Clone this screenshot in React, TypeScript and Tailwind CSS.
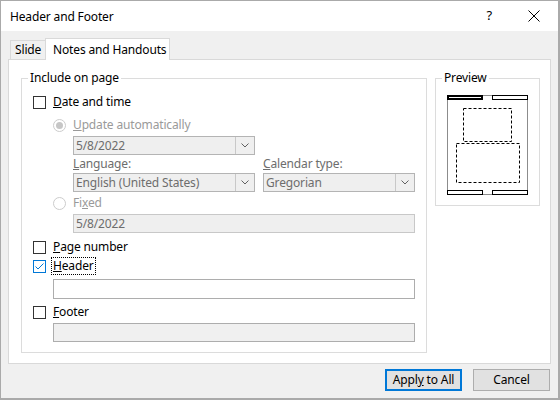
import React from "react";

/**
 * "Header and Footer" dialog, Notes and Handouts tab.
 * Classic Windows dialog chrome: title bar, tab strip, group boxes, disabled combos.
 */

const FONT = { fontFamily: '"Noto Sans", "Open Sans", Arial, sans-serif' };

function Chevron() {
  return (
    <svg width="8" height="5" viewBox="0 0 8 5" className="text-[#606060]">
      <path d="M0.5 0.5 L4 4 L7.5 0.5" fill="none" stroke="currentColor" strokeWidth="1" />
    </svg>
  );
}

function Combo({ value, width }: { value: string; width: string }) {
  return (
    <div className={`flex h-[19px] ${width} border border-[#b4b4b4] bg-[#efefef]`}>
      <div className="flex flex-1 items-center whitespace-nowrap pl-[2px] leading-none text-[#6d6d6d]">{value}</div>
      <div className="flex w-[19px] items-center justify-center border-l border-[#c8c8c8]">
        <Chevron />
      </div>
    </div>
  );
}

function Checkbox({ checked }: { checked?: boolean }) {
  return (
    <div
      className={`flex h-[13px] w-[13px] shrink-0 items-center justify-center border bg-white ${
        checked ? "border-[#0078d7]" : "border-[#333333]"
      }`}
    >
      {checked && (
        <svg width="11" height="11" viewBox="0 0 11 11">
          <path d="M1.5 5.5 L4 8 L9.5 2.5" fill="none" stroke="#0078d7" strokeWidth="1" />
        </svg>
      )}
    </div>
  );
}

function Radio({ checked }: { checked?: boolean }) {
  return (
    <div className="flex h-[13px] w-[13px] shrink-0 items-center justify-center rounded-full border border-[#cccccc] bg-white">
      {checked && <div className="h-[7px] w-[7px] rounded-full bg-[#c6c6c6]" />}
    </div>
  );
}

function GroupBox({
  label,
  className,
  children,
}: {
  label: string;
  className: string;
  children?: React.ReactNode;
}) {
  return (
    <div className={`relative border border-[#dcdcdc] ${className}`}>
      <span className="absolute left-[6px] top-[-9px] whitespace-nowrap bg-white px-[2px] leading-[16px]">{label}</span>
      {children}
    </div>
  );
}

function PreviewDrawing() {
  return (
    <svg width="81" height="100" viewBox="0 0 81 100" className="ml-[11px] mt-[16px]">
      <rect x="0.5" y="0.5" width="80" height="99" fill="white" stroke="#8c8c8c" />
      <rect x="1" y="1" width="34" height="3" fill="white" stroke="black" strokeWidth="2" />
      <rect x="45.5" y="0.5" width="35" height="4" fill="white" stroke="black" />
      <rect x="0.5" y="95.5" width="35" height="4" fill="white" stroke="black" />
      <rect x="45.5" y="95.5" width="35" height="4" fill="white" stroke="black" />
      <rect x="16.5" y="13.5" width="48" height="33" fill="none" stroke="black" strokeDasharray="3 2" />
      <rect x="9.5" y="48.5" width="63" height="39" fill="none" stroke="black" strokeDasharray="3 2" />
    </svg>
  );
}

export default function App() {
  return (
    <div
      style={FONT}
      className="flex h-[400px] w-[560px] flex-col border-l border-t border-b-2 border-r-2 border-[#aaaaaa] bg-[#f0f0f0] text-[12px] tracking-[-0.15px] text-black"
    >
      {/* Title bar */}
      <div className="flex h-[30px] shrink-0 items-center bg-white pl-[9px]">
        <span className="flex-1 pt-[1px]">Header and Footer</span>
        <span className="mr-[36px] text-[13px]">?</span>
        <svg width="12" height="12" viewBox="0 0 12 12" className="mr-[18px]">
          <path d="M0.5 0.5 L11.5 11.5 M11.5 0.5 L0.5 11.5" stroke="black" strokeWidth="1" />
        </svg>
      </div>

      <div className="flex flex-1 flex-col pl-[7px] pr-[8px]">
        {/* Tabs */}
        <div className="mt-[7px] flex h-[21px] items-end pl-[2px]">
          <div className="flex h-[19px] w-[35px] items-center whitespace-nowrap border-l border-t border-[#d9d9d9] pl-[4px]">
            Slide
          </div>
          <div className="relative z-10 -mb-px flex h-[22px] w-[125px] items-center whitespace-nowrap border-l border-r border-t border-[#d9d9d9] bg-white pl-[7px]">
            Notes and Handouts
          </div>
        </div>

        {/* Tab panel */}
        <div className="flex h-[305px] w-[543px] border border-[#d9d9d9] bg-white pl-[12px] pt-[18px]">
          <GroupBox label="Include on page" className="h-[275px] w-[406px]">
            <div className="flex flex-col pl-[11px]">
              <div className="mt-[14px] flex h-[18px] items-center gap-[7px]">
                <Checkbox />
                <span>
                  <span className="underline">D</span>ate and time
                </span>
              </div>

              <div className="ml-[20px] mt-[5px] flex h-[18px] items-center gap-[7px] text-[#9a9a9a]">
                <Radio checked />
                <span>
                  <span className="underline">U</span>pdate automatically
                </span>
              </div>

              <div className="ml-[40px] mt-[2px]">
                <Combo value="5/8/2022" width="w-[182px]" />
              </div>

              <div className="ml-[40px] mt-[1px] flex h-[16px] items-center text-[#6d6d6d]">
                <span className="w-[190px]">
                  <span className="underline">L</span>anguage:
                </span>
                <span>
                  <span className="underline">C</span>alendar type:
                </span>
              </div>

              <div className="ml-[40px] mt-[1px] flex gap-[8px]">
                <Combo value="English (United States)" width="w-[182px]" />
                <Combo value="Gregorian" width="w-[152px]" />
              </div>

              <div className="ml-[20px] mt-[2px] flex h-[18px] items-center gap-[7px] text-[#9a9a9a]">
                <Radio />
                <span>
                  Fi<span className="underline">x</span>ed
                </span>
              </div>

              <div className="ml-[40px] mt-[2px] flex h-[19px] w-[342px] items-center border border-[#c8c8c8] bg-[#efefef] pl-[2px] text-[#6d6d6d]">
                5/8/2022
              </div>

              <div className="mt-[5px] flex h-[18px] items-center gap-[7px]">
                <Checkbox />
                <span>
                  <span className="underline">P</span>age number
                </span>
              </div>

              <div className="mt-[1px] flex h-[18px] items-center gap-[5px]">
                <Checkbox checked />
                <span className="border border-dotted border-black px-[1px] leading-[16px]">
                  <span className="underline">H</span>eader
                </span>
              </div>

              <div className="ml-[20px] mt-[4px] h-[20px] w-[362px] border border-[#adadad] bg-white" />

              <div className="mt-[4px] flex h-[18px] items-center gap-[7px]">
                <Checkbox />
                <span>
                  <span className="underline">F</span>ooter
                </span>
              </div>

              <div className="ml-[20px] mt-[2px] h-[19px] w-[362px] border border-[#adadad] bg-[#f0f0f0]" />
            </div>
          </GroupBox>

          <GroupBox label="Preview" className="ml-[8px] h-[128px] w-[105px]">
            <PreviewDrawing />
          </GroupBox>
        </div>

        {/* Buttons */}
        <div className="mt-[5px] flex justify-end gap-[11px]">
          <button className="flex h-[22px] w-[77px] items-center justify-center border-2 border-[#0078d7] bg-[#e1e1e1]">
            <span>
              Appl<span className="underline">y</span> to All
            </span>
          </button>
          <button className="flex h-[22px] w-[77px] items-center justify-center border border-[#adadad] bg-[#e1e1e1]">
            Cancel
          </button>
        </div>
      </div>
    </div>
  );
}
